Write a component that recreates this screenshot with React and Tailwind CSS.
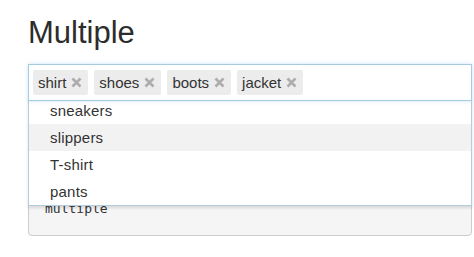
import React from "react";

function XIcon() {
  return (
    <svg width="11" height="11" viewBox="0 0 11 11" className="block">
      <path d="M1.5 1.5 L9.5 9.5 M9.5 1.5 L1.5 9.5" stroke="#adadad" strokeWidth="2.6" strokeLinecap="butt" />
    </svg>
  );
}

function Tag({ label }) {
  return (
    <div className="flex items-center h-[25px] bg-[#ececec] rounded-[2px] pl-[5px] pr-[6px] gap-[5px] leading-[25px]">
      <span>{label}</span>
      <XIcon />
    </div>
  );
}

export default function App() {
  const tags = ["shirt", "shoes", "boots", "jacket"];
  const items = ["sneakers", "slippers", "T-shirt", "pants"];
  return (
    <div
      className="bg-white min-h-[257px] pl-[28px] pt-[16px] text-[#333]"
      style={{ fontFamily: '"Liberation Sans", Arial, sans-serif' }}
    >
      <h1 className="text-[31px] leading-[33px] font-normal text-[#2c2c2c] m-0">Multiple</h1>
      <div className="relative w-[444px] mt-[15px]">
        <div className="relative z-10 h-[37px] flex items-center gap-[6px] pl-[4px] bg-white border border-[#a6cbe0] shadow-[0_0_4px_rgba(102,175,233,0.35)] text-[15px]">
          {tags.map((t) => (
            <Tag key={t} label={t} />
          ))}
        </div>
        <div className="absolute z-[5] left-0 top-[33px] w-[444px] bg-white border-x border-b border-[#b3cde0] shadow-[0_2px_3px_rgba(0,0,0,0.12)] text-[15px]">
          {items.map((it, i) => (
            <div
              key={it}
              className={
                "h-[27px] leading-[27px] pl-[21px] tracking-[0.2px] " + (i === 1 ? "bg-[#f2f2f2]" : "bg-white")
              }
            >
              {it}
            </div>
          ))}
        </div>
        <pre
          className="mt-[19px] h-[116px] w-[444px] bg-[#f5f5f5] border border-[#cccccc] rounded-[4px] pl-[16px] pt-[79px] text-[13px] leading-[18px] text-[#333]"
          style={{ fontFamily: '"DejaVu Sans Mono", "Liberation Mono", monospace' }}
        >
          multiple
        </pre>
      </div>
    </div>
  );
}
